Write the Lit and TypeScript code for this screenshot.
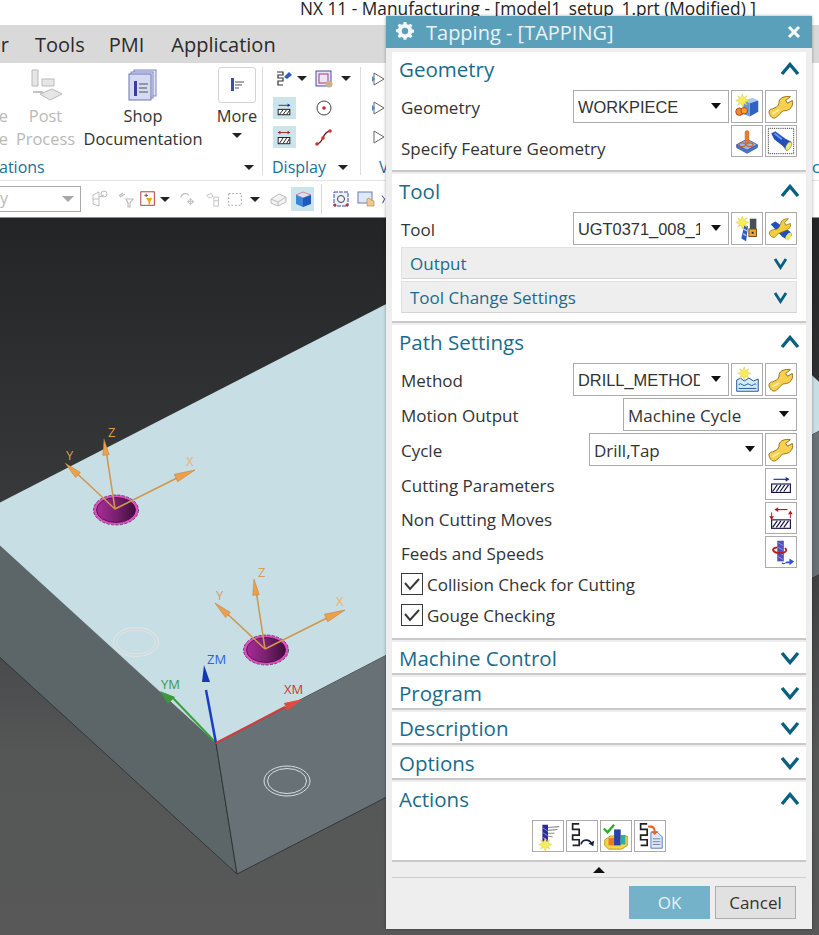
import { LitElement, html, css, svg } from "lit";
import { customElement } from "lit/decorators.js";

const wrench = svg`<path d="M4 24C2 21 4 18 7 18L11 16C13 15 14 13 14 10C15 6 20 4 26 5L21 9L23 12L28 9C30 15 25 20 20 20C18 20 17 21 15 23L11 27C8 29 5 27 4 24Z" fill="#f6d04e" stroke="#8c6c14"/><path d="M7 23L14 19" stroke="#fff3b0" fill="none" stroke-width="1.500"/>`;
const spark = (x: number, y: number) => svg`<path transform="translate(${x} ${y})" d="M0-7L1.5-3 5-5 3-1.500 7 0 3 1.500 5 5 1.500 3 0 7-1.500 3-5 5-3 1.500-7 0-3-1.500-5-5-1.500-3Z" fill="#f7ee5a" stroke="#d9c84a" stroke-width=".5"/>`;
const hatch = (x: number, y: number) => svg`<rect x=${x} y=${y} width="20" height="9" fill="#fff" stroke="#101040" stroke-width="1.200"/><path d="M${x + 1} ${y + 8}l5-7M${x + 5} ${y + 8}l5-7M${x + 9} ${y + 8}l5-7M${x + 13} ${y + 8}l5-7" stroke="#101040" fill="none" stroke-width="1.200"/>`;
const pathS = svg`<path d="M13 3H6V9H13V15H6V20H13V26H6" fill="none" stroke="#222" stroke-width="1.800"/>`;

// dialog button icons, all drawn on a 32 box
const ICONS: Record<string, unknown> = {
  wrench,
  geomNew: svg`<path d="M13 9L22 6L28 9L19 12Z" fill="#a9cbf2"/><path d="M19 12L28 9V21L19 26Z" fill="#2f62c4"/><path d="M13 9L19 12V26L11 23Z" fill="#5f97e6"/>${spark(11, 9)}<circle cx="8" cy="21" r="4" fill="#f08a2a" stroke="#b4401c"/><circle cx="13" cy="20" r="3.500" fill="#f2a032" stroke="#b4401c"/>`,
  feature: svg`<path d="M5 20L16 14L27 20L16 26Z" fill="#9bb8e8" stroke="#3c5fae"/><path d="M5 20V23L16 29L27 23V20L16 26Z" fill="#4e78c9" stroke="#3c5fae"/><rect x="14" y="5" width="4" height="13" rx="1.500" fill="#ee7a28" stroke="#b9541a" stroke-width=".5"/><ellipse cx="11" cy="20" rx="3.500" ry="2" fill="none" stroke="#c9652a" stroke-width="1.200"/><ellipse cx="19" cy="20" rx="3.500" ry="2" fill="none" stroke="#c9652a" stroke-width="1.200"/>`,
  flash: svg`<rect x="2.500" y="2.500" width="27" height="27" fill="none" stroke="#222" stroke-dasharray="1 1"/><path d="M6 8L10 6L21 14L27 17L22 26L18 21L9 14Z" fill="#1f4fc0" stroke="#123180" stroke-width=".5"/><path d="M9 8L17 14" stroke="#6b9bec" stroke-width="2" fill="none"/><ellipse cx="24" cy="21.500" rx="2.500" ry="5" transform="rotate(30 24 21.500)" fill="#ecec7a" stroke="#6a6a20" stroke-width=".5"/>`,
  toolNew: svg`<path d="M13 12L17 13L15 29L10 26Z" fill="#2c5bbb"/><path d="M12 16L16 18M12 21L15 23" stroke="#a8c6f2" stroke-width="1.500"/>${spark(11, 9)}<rect x="19" y="5" width="7" height="17" fill="#4a4f55"/><rect x="18" y="16" width="8" height="8" fill="#f0a53a" stroke="#6e4812"/><rect x="21" y="19" width="2" height="2" fill="#222"/>`,
  toolEdit: svg`<path d="M5 11L10 8L25 18L28 22L23 28L17 24Z" fill="#1f4fc0"/><ellipse cx="24" cy="24" rx="2.500" ry="4.500" transform="rotate(35 24 24)" fill="#ecec5a"/><path d="M4 22C3 20 4 17 7 17L12 16C14 15 15 12 16 9C17 6 20 5 24 5L20 9L21 12L26 10C27 14 24 17 20 18L13 21L9 25C7 25 5 24 4 22Z" fill="#f4cd3a" stroke="#7a6010" stroke-width=".7"/>`,
  methodNew: svg`<path d="M5 16L9 14L13 17L18 14L23 17L28 15V28H5Z" fill="#d5ecf8" stroke="#1c4f9c"/><path d="M7 21q2-2 4 0t4 0 4 0 4 0 3 0M7 25h19" fill="none" stroke="#1c4f9c"/>${spark(13, 9)}`,
  cutting: svg`<path d="M8 11H24" stroke="#1a2aa0" stroke-width="1.200"/><path d="M25 11l-4-2.500v5z" fill="#1a2aa0"/>${hatch(6, 16)}`,
  noncut: svg`<path d="M10 7H23" stroke="#b01a1a" stroke-width="1.200"/><path d="M9 7l4-2.500v5z" fill="#b01a1a"/><path d="M6 10V16M26 10V16" stroke="#b01a1a"/><path d="M6 18l-2.500-4h5zM26 8l-2.500 4h5z" fill="#b01a1a"/>${hatch(6, 18)}`,
  feeds: svg`<rect x="12" y="4" width="7" height="22" fill="#5050b8"/><path d="M13 6l5 3M13 11l5 3M13 16l5 3M13 21l5 3" stroke="#9a9ae0"/><path d="M20 12C24 14 20 18 14 17C8 17 4 12 12 11" fill="none" stroke="#c01818" stroke-width="2"/><path d="M17 27C18 28 20 28 22 26H25V23L30 26L25 30V28H21C19 30 16 29 17 27Z" fill="#2f4fd8"/>`,
  generate: svg`<rect x="10" y="4" width="6" height="19" fill="#2a2a9c"/><path d="M10 7l6 4M10 12l6 4M10 17l6 4" stroke="#8a8ae0"/><path d="M16 7L28 6M16 10L26 9M16 13L23 13M16 16L21 17" stroke="#8c8c8c" stroke-width="1.200"/>${spark(13, 25)}`,
  replay: svg`${pathS}<path d="M15 25C16 19 24 19 26 24" fill="none" stroke="#16213f" stroke-width="1.800"/><path d="M23 24l5 3 1-6z" fill="#16213f"/>`,
  verify: svg`<path d="M4 20L10 16H28V26L22 30H8L4 26Z" fill="#f4d64e" stroke="#b89a20"/><rect x="8" y="18" width="7" height="8" fill="#ea7a2a"/><rect x="14" y="9" width="7" height="17" fill="#2a3fa8"/><rect x="21" y="15" width="5" height="10" fill="#2ab0a0"/><path d="M3 8L7 12L14 4" fill="none" stroke="#24b024" stroke-width="2.500"/>`,
  listing: svg`${pathS}<path d="M17 12H24L29 17V29H17Z" fill="#dfe7f8" stroke="#5878b8"/><path d="M19 19H27M19 22H27M19 25H27" stroke="#6a80b0"/><path d="M14 5C19 4 22 6 22 11H25L21 15L17 11H20C20 8 18 7 14 7Z" fill="#e0662a"/>`,
};

@customElement("app-root")
export class AppRoot extends LitElement {
  static styles = css`
    :host {
      display: block;
      position: relative;
      width: 819px;
      height: 935px;
      overflow: hidden;
      background: #fff;
      font-family: "Open Sans", "Noto Sans", sans-serif;
      color: #333;
    }
    .wintitle {
      height: 25px;
      padding-left: 300px;
      font-size: 17.300px;
      line-height: 17px;
      color: #222;
      white-space: nowrap;
    }
    .menu {
      height: 38px;
      background: #d9d9d9;
      display: flex;
      align-items: center;
      font-size: 20px;
      color: #2b2b2b;
    }
    .menu .cut { width: 9px; overflow: hidden; display: flex; justify-content: flex-end; margin-right: 26px; }
    .menu .item { margin-right: 24px; }
    .menu .item.pmi { margin-right: 27px; }

    .ribbon { height: 117px; display: flex; background: #fff; }
    .group { display: flex; flex-direction: column; border-right: 1px solid #dcdcdc; height: 108px; margin-top: 4px; }
    .group .tools { flex: 1; display: flex; min-height: 0; }
    .group .label { height: 16px; display: flex; align-items: center; font-size: 16px; color: #1d6f94; line-height: 20px; }
    .main { width: 263px; box-sizing: border-box; }
    .main .label { padding-right: 8px; }
    .main .label span { flex: 1; margin-left: -1px; }
    .col { display: flex; flex-direction: column; align-items: center; font-size: 16.400px; line-height: 23px; white-space: nowrap; }
    .col .ic { height: 36px; flex: none; margin-bottom: 1px; display: flex; align-items: center; justify-content: center; }
    .col.off { color: #b9b9b9; }
    .col.clip { width: 8px; align-items: flex-end; overflow: hidden; margin-right: 10px; padding-top: 37px; }
    .col.post { width: 55px; }
    .col.shop { width: 120px; margin-left: 10px; }
    .col.more { width: 38px; margin-left: 15px; }
    .morebox { width: 36px; height: 34px; border: 1px solid #d4d4d4; border-radius: 3px; display: flex; align-items: center; justify-content: center; }
    .caret { width: 0; height: 0; border-left: 5px solid transparent; border-right: 5px solid transparent; border-top: 5px solid #222; }
    .col .caret { margin-top: 6px; }
    .display { width: 98px; box-sizing: border-box; padding-left: 9px; }
    .dgrid { display: grid; grid-template-columns: 24px 12px 32px 12px; grid-auto-rows: 29px; margin-top: -3px; align-items: center; justify-items: center; align-content: start; }
    .hl { width: 23px; height: 22px; background: #cce4ec; display: flex; align-items: center; justify-content: center; }
    .display .label span { width: 66px; }
    .view { width: 40px; padding-left: 10px; box-sizing: border-box; flex: none; height: 108px; margin-top: 4px; display: flex; flex-direction: column; }
    .view .tri { height: 29px; display: flex; align-items: center; }
    .view .tri:first-child { margin-top: -3px; }
    .view .label { margin-top: auto; height: 16px; display: flex; align-items: center; font-size: 16px; color: #1d6f94; padding-left: 8px; }
    .right { margin-left: auto; width: 7px; height: 108px; margin-top: 4px; display: flex; align-items: flex-end; overflow: hidden; font-size: 16px; color: #1d6f94; }
    .right span { height: 16px; line-height: 16px; }

    .toolbar { height: 38px; box-sizing: border-box; border-top: 1px solid #e3e3e3; border-bottom: 1px solid #8c8c8c; background: #fff; display: flex; align-items: center; }
    .select { width: 81px; height: 26px; box-sizing: border-box; border: 1px solid #a9a9a9; border-left: none; display: flex; align-items: center; justify-content: space-between; padding-right: 6px; font-size: 16px; color: #b9b9b9; margin-right: 9px; }
    .select .caret { border-top-color: #a8a8a8; border-left-width: 6px; border-right-width: 6px; border-top-width: 6px; }
    .select span { margin-top: -3px; }
    .cell { display: flex; align-items: center; justify-content: center; height: 24px; flex: none; }
    .cell.on { background: #cce4ec; }
    .cell.sep { border-left: 1px solid #d8d8d8; height: 30px; box-sizing: border-box; }

    .view3d { display: block; width: 819px; height: 717px; }
    .view3d text { font-family: "Open Sans", sans-serif; font-size: 13px; }

    .dialog { position: absolute; left: 386px; top: 16px; width: 426px; height: 913px; background: #eeeeee; display: flex; flex-direction: column; box-shadow: 0 0 3px rgba(0,0,0,.35); }
    .dtitle { height: 32px; background: #5ba0bb; color: #e9f3f6; display: flex; align-items: center; font-size: 20px; padding: 0 11px 0 9px; margin-bottom: 4px; flex: none; }
    .dtitle span { margin-left: 11px; flex: 1; }
    .sections { display: flex; flex-direction: column; gap: 2px; padding: 0 6px; }
    .sec { background: #fff; border-bottom: 2px solid #c9c9c9; padding: 0 9px; }
    .sec.closed { height: 31px; }
    .sechead { height: 38px; margin: 0 -3px 0 -2px; display: flex; align-items: center; justify-content: space-between; font-size: 20.500px; color: #1a6b8b; box-sizing: border-box; padding-bottom: 4px; }
    .sec.closed .sechead { height: 31px; padding-bottom: 0; padding-top: 1px; }
    .body { display: flex; flex-direction: column; gap: 2px; }
    .row { display: flex; align-items: center; gap: 2px; font-size: 17px; }
    .row .name { flex: 1; white-space: nowrap; padding-top: 2px; }
    .row .name.low { align-self: flex-end; padding-top: 0; line-height: 20px; margin-bottom: -2px; }
    .row.s .btn, .actions .btn { height: 32px; }
    .drop { height: 33px; box-sizing: border-box; border: 1px solid #ababab; display: flex; align-items: center; padding: 0 7px 0 4px; font-size: 17px; color: #333; background: #fff; }
    .drop .val { flex: 1; overflow: hidden; white-space: nowrap; min-width: 0; margin-right: 11px; padding-top: 1px; }
    .drop .val.caps { font-family: "Liberation Sans", Arial, sans-serif; font-size: 16.400px; }
    .drop .caret { border-left-width: 5.500px; border-right-width: 5.500px; border-top-width: 6px; border-top-color: #111; margin-top: -2px; flex: none; }
    .d156 { width: 156px; }
    .d174 { width: 174px; }
    .btn { width: 32px; height: 33px; box-sizing: border-box; border: 1px solid #ababab; background: #fff; display: flex; align-items: center; justify-content: center; flex: none; }
    .btn svg { display: block; width: 30px; height: 30px; }
    .sub { height: 32px; box-sizing: border-box; background: #eeeeee; border: 1px solid #e2e2e2; border-bottom-color: #d4d4d4; display: flex; align-items: center; justify-content: space-between; padding: 0 8px 0 8px; font-size: 17px; color: #1a6b8b; }
    .check { display: flex; align-items: center; gap: 4px; font-size: 17px; height: 22px; }
    .box { width: 22px; height: 22px; box-sizing: border-box; border: 1px solid #3a3a3a; display: flex; align-items: center; justify-content: center; background: #fff; }
    .checks { display: flex; flex-direction: column; gap: 9px; padding-top: 3px; }
    .actions { display: flex; justify-content: center; gap: 2px; }
    .pad-geo { padding-bottom: 13px; }
    .pad-tool { padding-bottom: 8px; }
    .pad-path { padding-bottom: 12px; }
    .pad-act { padding-bottom: 8px; }
    .grow { display: flex; justify-content: center; align-items: center; height: 16px; box-sizing: border-box; margin: 0 6px; border-bottom: 1px solid #cfcfcf; flex: none; }
    .up { width: 0; height: 0; border-left: 6px solid transparent; border-right: 6px solid transparent; border-bottom: 6px solid #111; }
    .foot { display: flex; justify-content: flex-end; gap: 5px; padding: 8px 16px 0 0; }
    .ok, .cancel { width: 81px; height: 33px; box-sizing: border-box; display: flex; align-items: center; justify-content: center; font-size: 17px; }
    .ok { background: #74b2c9; color: #e4f1f5; }
    .cancel { background: #e1e1e1; border: 1px solid #adadad; color: #333; }
  `;

  private chevron(up: boolean, small = false) {
    const w = small ? 15 : 20;
    const h = small ? 13 : 14;
    const d = up ? `M2 ${h - 2}L${w / 2} 2.500L${w - 2} ${h - 2}` : `M2 2L${w / 2} ${h - 2.5}L${w - 2} 2`;
    return html`<svg width=${w} height=${h} viewBox="0 0 ${w} ${h}"><path d=${d} fill="none" stroke="#08607f" stroke-width=${small ? 2.8 : 3.4}/></svg>`;
  }

  private head(title: string, open: boolean) {
    return html`<div class="sechead"><span>${title}</span>${this.chevron(open)}</div>`;
  }

  private btn(name: string) {
    return html`<div class="btn"><svg viewBox="0 0 32 32">${ICONS[name]}</svg></div>`;
  }

  private drop(value: string, cls: string, caps = false) {
    return html`<div class="drop ${cls}"><span class="val ${caps ? "caps" : ""}">${value}</span><span class="caret"></span></div>`;
  }

  private check(label: string) {
    return html`<div class="check"><span class="box"><svg width="18" height="18" viewBox="0 0 18 18"><path d="M2 8L7 14L16 4" fill="none" stroke="#3a3a3a" stroke-width="2"/></svg></span>${label}</div>`;
  }

  private sm(body: unknown, w = 20, h = 20) {
    return html`<svg width=${w} height=${h} viewBox="0 0 20 20">${body}</svg>`;
  }

  private triad(dx: number, dy: number) {
    const cone = (x: number, y: number, bx: number, by: number) => {
      const nx = by - y, ny = x - bx;
      const k = 0.2;
      return svg`<polygon points="${x},${y} ${bx + nx * k},${by + ny * k} ${bx - nx * k},${by - ny * k}" fill="#eda04c" stroke="#b87a30" stroke-width=".5"/>`;
    };
    return svg`<g transform="translate(${dx} ${dy})">
      <ellipse cx="116" cy="510" rx="22.500" ry="15" fill="#e24cc0" stroke="#3a2a4a" stroke-width=".7" stroke-dasharray="3 1.500"/>
      <ellipse cx="116" cy="510" rx="19.500" ry="12.500" fill="url(#hole)" stroke="#3c1240" stroke-width=".8"/>
      <path d="M115 509L106 450M115 509L70 467M115 509L185 474" stroke="#cf9850" stroke-width="1.600" fill="none"/>
      ${cone(104, 439, 106, 455)}${cone(65, 463, 78, 475)}${cone(195, 470, 176, 478)}
      <text x="108" y="437" fill="#dd9c50">Z</text>
      <text x="66" y="460" fill="#dd9c50">Y</text>
      <text x="186" y="466" fill="#eeb070">X</text>
    </g>`;
  }

  private canvas() {
    return html`<svg class="view3d" viewBox="0 218 819 717">
      <defs>
        <linearGradient id="bg" x1="0" y1="0" x2="0" y2="1"><stop offset="0" stop-color="#232426"/><stop offset=".42" stop-color="#393a3c"/><stop offset=".75" stop-color="#555656"/><stop offset="1" stop-color="#585858"/></linearGradient>
        <linearGradient id="hole" x1="0" y1="0" x2="1" y2="0"><stop offset="0" stop-color="#a82c98"/><stop offset=".5" stop-color="#7a2070"/><stop offset="1" stop-color="#3c1038"/></linearGradient>
      </defs>
      <rect x="0" y="218" width="819" height="717" fill="url(#bg)"/>
      <polygon points="-30,516 216,743 237,874 -30,630" fill="#5c6668" stroke="#2a2e30" stroke-width=".8"/>
      <polygon points="216,743 830,425 830,569 237,874" fill="#687276" stroke="#2a2e30" stroke-width=".8"/>
      <polygon points="-30,518 610,189 830,392 830,425 216,743" fill="#c7dee5"/>
      <ellipse cx="136" cy="642" rx="22.500" ry="14.500" fill="none" stroke="#e0e2e0" stroke-width="1.300"/>
      <ellipse cx="136" cy="642" rx="19.500" ry="12" fill="none" stroke="#e0e2e0" stroke-width="1"/>
      <ellipse cx="287" cy="781" rx="23" ry="15" fill="none" stroke="#d8dee0" stroke-width="1"/>
      <ellipse cx="287" cy="781" rx="19.500" ry="12.500" fill="none" stroke="#d8dee0" stroke-width="1"/>
      ${this.triad(0, 0)}${this.triad(150, 140)}
      <path d="M216 743L172 697" stroke="#3aa03a" stroke-width="2"/><polygon points="160,691 175,697 168,704" fill="#3c9a3c"/>
      <path d="M216 743L206 690" stroke="#1a3fc0" stroke-width="2.500"/><polygon points="204,665 210,682 202,682" fill="#1238b0"/>
      <path d="M216 743L285 707" stroke="#d03c3c" stroke-width="2"/><polygon points="303,699 284,703 287,711" fill="#e04a40"/>
      <text x="161" y="689" fill="#3c9a4c">YM</text>
      <text x="207" y="664" fill="#2a62e0">ZM</text>
      <text x="284" y="694" fill="#c83838">XM</text>
    </svg>`;
  }

  private ribbon() {
    return html`<div class="ribbon">
      <div class="group main">
        <div class="tools">
          <div class="col off clip"><span>e</span><span>e</span></div>
          <div class="col off post">
            <div class="ic"><svg width="36" height="34" viewBox="0 0 36 34"><path d="M4 2H10V18H4ZM14 11H26V18H14ZM12 26L24 21L34 26L22 32Z" fill="#e6e6e6" stroke="#b9b9b9"/><path d="M5 24H15" stroke="#c4c4c4" stroke-width="2"/></svg></div>
            <span>Post</span><span>Process</span>
          </div>
          <div class="col shop">
            <div class="ic"><svg width="30" height="32" viewBox="0 0 30 32"><rect x="6" y="1" width="22" height="26" fill="#dfe3f6" stroke="#8088c0"/><rect x="3" y="3" width="22" height="26" fill="#dfe3f6" stroke="#8088c0"/><rect x="1" y="5" width="22" height="26" fill="#d4daf2" stroke="#6c74b4"/><rect x="6" y="12" width="3" height="15" fill="#3b3ba0"/><path d="M11 15H20M11 19H19M11 23H20" stroke="#555"/></svg></div>
            <span>Shop</span><span>Documentation</span>
          </div>
          <div class="col more">
            <div class="ic"><div class="morebox"><svg width="18" height="18" viewBox="0 0 18 18"><rect x="3" y="2" width="3" height="13" fill="#3a4fa8"/><path d="M7 6H16M7 9H14M7 12H11" stroke="#555" stroke-width="1.200"/></svg></div></div>
            <span>More</span><span class="caret"></span>
          </div>
        </div>
        <div class="label"><span>ations</span><i class="caret"></i></div>
      </div>
      <div class="group display">
        <div class="tools">
          <div class="dgrid">
            ${this.sm(svg`<path d="M3 3H9V6H4V9H9V12H4V16H9" fill="none" stroke="#333" stroke-width="1.200"/><path d="M10 8L15 3L18 6L13 10Z" fill="#2f5bc8"/>`)}<i class="caret"></i>
            ${this.sm(svg`<rect x="2" y="2" width="15" height="15" fill="#e9e4f6" stroke="#4a4aa8"/><rect x="5" y="5" width="9" height="9" fill="none" stroke="#b03a6a"/><circle cx="15" cy="15" r="3.500" fill="#c8b090"/>`)}<i class="caret"></i>
            <div class="hl">${this.sm(svg`<path d="M4 7H16" stroke="#1a2aa0"/><path d="M17 7l-3-2v4z" fill="#1a2aa0"/><rect x="3.500" y="11.500" width="13" height="6" fill="#fff" stroke="#111"/><path d="M5 17l4-5M9 17l4-5M13 17l3-4" stroke="#111"/>`, 18, 18)}</div><span></span>
            ${this.sm(svg`<circle cx="10" cy="10" r="7" fill="#fff" stroke="#444"/><circle cx="10" cy="10" r="1.800" fill="#c02828"/>`)}<span></span>
            <div class="hl">${this.sm(svg`<path d="M4 5H16" stroke="#b01a1a"/><path d="M3 5l3-2v4zM17 5l-3-2v4z" fill="#b01a1a"/><rect x="3.500" y="10.500" width="13" height="7" fill="#fff" stroke="#111"/><path d="M5 17l4-6M9 17l4-6M13 17l3-5" stroke="#111"/>`, 18, 18)}</div><span></span>
            ${this.sm(svg`<path d="M3 17C10 16 8 5 16 4" fill="none" stroke="#6a2020" stroke-width="1.300"/><circle cx="3" cy="17" r="1.800" fill="#d03030"/><circle cx="9" cy="11" r="1.800" fill="#d03030"/><circle cx="16" cy="4" r="1.800" fill="#d03030"/>`)}<span></span>
          </div>
        </div>
        <div class="label"><span>Display</span><i class="caret"></i></div>
      </div>
      <div class="view">
        ${[0, 1, 2].map((i) => html`<div class="tri"><svg width="16" height="16" viewBox="0 0 16 16"><path d="M3 2L13 8L3 14Z" fill="none" stroke="#666"/>${i < 2 ? svg`<path d="M1 5L4 8L1 11Z" fill="#4a88c8"/>` : ""}</svg></div>`)}
        <div class="label">V</div>
      </div>
      <div class="right"><span>c</span></div>
    </div>`;
  }

  private toolbar() {
    const g = "#bdbdbd";
    const cells: { w: number; cls?: string; body?: unknown; caret?: boolean }[] = [
      { w: 20, body: svg`<path d="M3 6L9 3V17L3 15ZM9 8L14 6M3 10H9" fill="none" stroke=${g}/><circle cx="14" cy="5" r="3" fill="none" stroke=${g}/>` },
      { w: 5 },
      { w: 20, body: svg`<path d="M5 8L10 5M4 7L8 4M11 10H18L15 14V18H13V14Z" fill="none" stroke=${g} stroke-width="1.200"/>` },
      { w: 4 },
      { w: 18, body: svg`<rect x="2" y="2" width="15" height="15" fill="#fff" stroke="#a83030"/><path d="M6 6H10M8 4V8" stroke="#a83030"/><path d="M8 9H15L12.500 13V16H10.500V13Z" fill="#e8a820"/>` },
      { w: 15, caret: true },
      { w: 6 },
      { w: 18, body: svg`<path d="M3 8C5 3 10 3 12 6" fill="none" stroke=${g} stroke-width="1.200"/><path d="M10 13H18M14 9V17" stroke=${g}/><circle cx="14" cy="13" r="2.500" fill="none" stroke=${g}/>` },
      { w: 8 },
      { w: 18, body: svg`<path d="M3 6L8 4L10 7L6 9ZM11 8H16V18H11ZM11 12H16" fill="none" stroke=${g}/>` },
      { w: 4 },
      { w: 18, body: svg`<rect x="3" y="4" width="14" height="13" fill="none" stroke="#9a9a9a" stroke-dasharray="2 2"/>` },
      { w: 4 },
      { w: 14, caret: true },
      { w: 6 },
      { w: 20, body: svg`<path d="M3 10L11 5L18 8V13L10 17L3 14Z" fill="#f2f2f2" stroke=${g}/><path d="M3 10L10 13L18 8M10 13V17" fill="none" stroke=${g}/>` },
      { w: 3 },
      { w: 23, cls: "on", body: svg`<path d="M3 6L10 3L18 6L10 9Z" fill="#cfe4f8" stroke="#e04060" stroke-width=".6"/><path d="M3 6L10 9V18L3 15Z" fill="#3a86d8"/><path d="M18 6L10 9V18L18 15Z" fill="#1c5cb8"/>` },
      { w: 7 },
      { w: 10, cls: "sep" },
      { w: 20, body: svg`<rect x="3" y="3" width="14" height="14" fill="#eef2fa" stroke="#3a4aa8" stroke-dasharray="4 1"/><circle cx="10" cy="10" r="3.500" fill="none" stroke="#444"/><circle cx="4" cy="16" r="1.500" fill="#c83030"/><circle cx="16" cy="16" r="1.500" fill="#c83030"/>` },
      { w: 5 },
      { w: 20, body: svg`<rect x="2" y="3" width="14" height="11" fill="#dfe8f6" stroke="#6a7ab0"/><path d="M11 17V10L13 9L15 11L18 12V17Z" fill="#f0c890" stroke="#b08040" stroke-width=".6"/>` },
      { w: 3 },
      { w: 14, body: svg`<path d="M4 5L8 10L5 16" fill="none" stroke="#4a5aa8" stroke-width="1.500"/>` },
    ];
    return html`<div class="toolbar">
      <div class="select"><span>y</span><i class="caret"></i></div>
      ${cells.map((c) => html`<div class="cell ${c.cls ?? ""}" style="width:${c.w}px">${c.caret ? html`<i class="caret"></i>` : c.body ? this.sm(c.body, 20, 20) : ""}</div>`)}
    </div>`;
  }

  private dialog() {
    return html`<div class="dialog">
      <div class="dtitle">
        <svg width="20" height="20" viewBox="0 0 20 20"><path d="M8.500 1h3l.5 2.500 2 .8L16.200 3l2 2-1.300 2.200.8 2 2.300.5v3l-2.300.5-.8 2L18.200 17l-2 2-2.200-1.300-2 .8-.5 2.300h-3l-.5-2.300-2-.8L3.800 19l-2-2 1.300-2.200-.8-2L0 12.300v-3l2.300-.5.800-2L1.800 5l2-2L6 4.300l2-.8Z" transform="translate(1 -1) scale(.9)" fill="#f2f8fa"/><circle cx="10" cy="9" r="3.200" fill="#5ba0bb"/></svg>
        <span>Tapping - [TAPPING]</span>
        <svg width="14" height="14" viewBox="0 0 14 14"><path d="M2 2L12 12M12 2L2 12" stroke="#fff" stroke-width="3"/></svg>
      </div>
      <div class="sections">
        <div class="sec pad-geo">
          ${this.head("Geometry", true)}
          <div class="body">
            <div class="row"><span class="name">Geometry</span>${this.drop("WORKPIECE", "d156", true)}${this.btn("geomNew")}${this.btn("wrench")}</div>
            <div class="row s"><span class="name low">Specify Feature Geometry</span>${this.btn("feature")}${this.btn("flash")}</div>
          </div>
        </div>
        <div class="sec pad-tool">
          ${this.head("Tool", true)}
          <div class="body">
            <div class="row"><span class="name">Tool</span>${this.drop("UGT0371_008_1", "d156", true)}${this.btn("toolNew")}${this.btn("toolEdit")}</div>
            <div class="sub"><span>Output</span>${this.chevron(false, true)}</div>
            <div class="sub"><span>Tool Change Settings</span>${this.chevron(false, true)}</div>
          </div>
        </div>
        <div class="sec pad-path">
          ${this.head("Path Settings", true)}
          <div class="body">
            <div class="row"><span class="name">Method</span>${this.drop("DRILL_METHOD", "d156", true)}${this.btn("methodNew")}${this.btn("wrench")}</div>
            <div class="row"><span class="name">Motion Output</span>${this.drop("Machine Cycle", "d174")}</div>
            <div class="row"><span class="name">Cycle</span>${this.drop("Drill,Tap", "d174")}${this.btn("wrench")}</div>
            <div class="row s"><span class="name">Cutting Parameters</span>${this.btn("cutting")}</div>
            <div class="row s"><span class="name">Non Cutting Moves</span>${this.btn("noncut")}</div>
            <div class="row s"><span class="name">Feeds and Speeds</span>${this.btn("feeds")}</div>
            <div class="checks">${this.check("Collision Check for Cutting")}${this.check("Gouge Checking")}</div>
          </div>
        </div>
        ${["Machine Control", "Program", "Description", "Options"].map((t) => html`<div class="sec closed">${this.head(t, false)}</div>`)}
        <div class="sec pad-act">
          ${this.head("Actions", true)}
          <div class="actions">${this.btn("generate")}${this.btn("replay")}${this.btn("verify")}${this.btn("listing")}</div>
        </div>
      </div>
      <div class="grow"><span class="up"></span></div>
      <div class="foot"><div class="ok">OK</div><div class="cancel">Cancel</div></div>
    </div>`;
  }

  render() {
    return html`
      <div class="wintitle">NX 11 - Manufacturing - [model1_setup_1.prt (Modified) ]</div>
      <div class="menu">
        <div class="cut"><span>er</span></div>
        <span class="item">Tools</span><span class="item pmi">PMI</span><span class="item">Application</span>
      </div>
      ${this.ribbon()}
      ${this.toolbar()}
      ${this.canvas()}
      ${this.dialog()}
    `;
  }
}
